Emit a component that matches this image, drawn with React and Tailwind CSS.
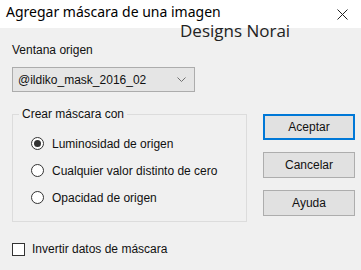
const Radio = ({ checked, label }) => (
  <div className="flex items-center h-[27px]">
    <span className="w-[13px] h-[13px] rounded-full border border-[#333] bg-white flex items-center justify-center">
      {checked && <span className="w-[7px] h-[7px] rounded-full bg-[#333]"></span>}
    </span>
    <span className="ml-[8px]">{label}</span>
  </div>
);

const Button = ({ children, primary }) => (
  <button
    className={
      primary
        ? "w-[92px] h-[26px] bg-[#e1e1e1] border-2 border-[#0078d7] text-[#111]"
        : "w-[92px] h-[26px] bg-[#e1e1e1] border border-[#adadad] text-[#111]"
    }
  >
    {children}
  </button>
);

export default function App() {
  return (
    <div className="relative w-[361px] h-[270px] bg-[#f0f0f0] flex flex-col overflow-hidden text-[12px] text-[#111] font-['Liberation_Sans',Arial,sans-serif]">
      {/* title bar */}
      <div className="h-[28px] bg-white flex items-center justify-between pl-[6px] pr-[13px]">
        <span className="text-[14px] text-black font-['Noto_Sans',sans-serif] leading-[18px] -mt-[4px]">
          Agregar máscara de una imagen
        </span>
        <svg width="11" height="11" viewBox="0 0 11 11">
          <path d="M0.5 0.5 L10.5 10.5 M10.5 0.5 L0.5 10.5" stroke="#222" strokeWidth="1" />
        </svg>
      </div>

      {/* watermark */}
      <div className="absolute left-[180px] top-[20px] text-[17px] text-[#222] font-['Open_Sans',sans-serif] leading-[22px]">
        Designs Norai
      </div>

      <div className="flex flex-1">
        {/* left column */}
        <div className="flex flex-col pl-[12px] w-[252px]">
          <div className="mt-[15px] leading-[14px]">Ventana origen</div>
          <div className="mt-[10px] w-[183px] h-[25px] bg-[#e5e5e5] border border-[#acacac] flex items-center justify-between pl-[5px] pr-[8px]">
            <span>@ildiko_mask_2016_02</span>
            <svg width="9" height="5" viewBox="0 0 9 5">
              <path d="M0.5 0.5 L4.5 4.5 L8.5 0.5" stroke="#707070" fill="none" strokeWidth="1" />
            </svg>
          </div>

          <fieldset className="mt-[15px] w-[235px] h-[115px] border border-[#dcdcdc]">
            <legend className="ml-[6px] px-[3px] leading-[14px]">Crear máscara con</legend>
            <div className="pl-[18px] pt-[9px]">
              <Radio checked label="Luminosidad de origen" />
              <Radio label="Cualquier valor distinto de cero" />
              <Radio label="Opacidad de origen" />
            </div>
          </fieldset>

          <div className="mt-[18px] flex items-center">
            <span className="w-[13px] h-[13px] border border-[#333] bg-white"></span>
            <span className="ml-[7px]">Invertir datos de máscara</span>
          </div>
        </div>

        {/* right column */}
        <div className="flex flex-col pl-[11px] pt-[86px] gap-[12px]">
          <Button primary>Aceptar</Button>
          <Button>Cancelar</Button>
          <Button>Ayuda</Button>
        </div>
      </div>
    </div>
  );
}
